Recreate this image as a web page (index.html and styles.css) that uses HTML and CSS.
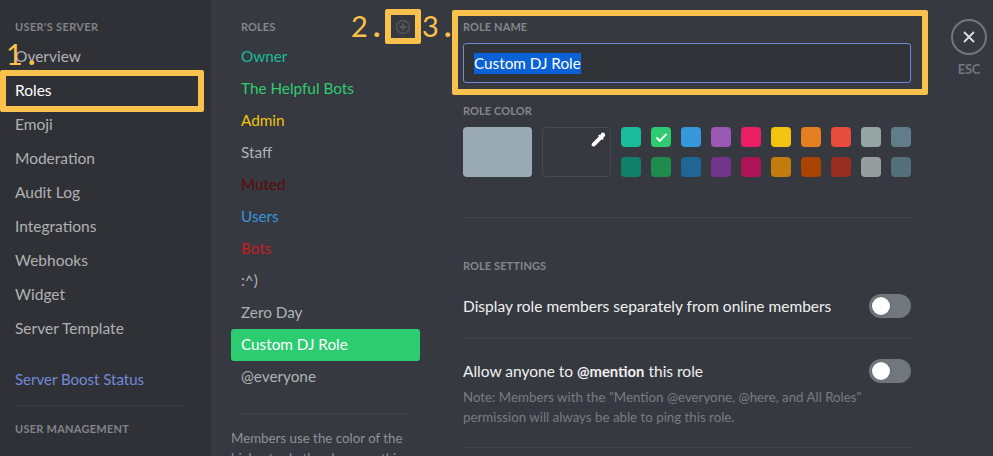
FILE: index.html
```html
<!DOCTYPE html>
<html lang="en">
<head>
<meta charset="utf-8">
<title>Server Settings - Roles</title>
<link rel="stylesheet" href="styles.css">
</head>
<body>
<div class="app">
  <nav class="sidebar">
    <h2 class="cap side-head">USER'S SERVER</h2>
    <a class="side-item">Overview</a>
    <a class="side-item active">Roles</a>
    <a class="side-item">Emoji</a>
    <a class="side-item">Moderation</a>
    <a class="side-item">Audit Log</a>
    <a class="side-item">Integrations</a>
    <a class="side-item">Webhooks</a>
    <a class="side-item">Widget</a>
    <a class="side-item">Server Template</a>
    <div class="side-sep-top"></div>
    <a class="side-item boost">Server Boost Status</a>
    <div class="side-sep"></div>
    <h2 class="cap side-head2">USER MANAGEMENT</h2>
    <a class="side-item">Members</a>
  </nav>
  <section class="roles">
    <h2 class="cap roles-head">ROLES</h2>
    <ul class="role-list">
      <li class="role teal">Owner</li>
      <li class="role green">The Helpful Bots</li>
      <li class="role yellow">Admin</li>
      <li class="role plain">Staff</li>
      <li class="role maroon">Muted</li>
      <li class="role blue">Users</li>
      <li class="role red">Bots</li>
      <li class="role plain">:^)</li>
      <li class="role plain">Zero Day</li>
      <li class="role selected">Custom DJ Role</li>
      <li class="role plain">@everyone</li>
    </ul>
    <div class="roles-sep"></div>
    <p class="roles-note">Members use the color of the highest role they have on this list.</p>
  </section>
  <main class="editor">
    <h2 class="cap name-label">ROLE NAME</h2>
    <div class="name-input"><span class="selection">Custom DJ Role</span></div>
    <h2 class="cap color-label">ROLE COLOR</h2>
    <div class="colors">
      <div class="color-default"></div>
      <div class="color-custom">
        <svg class="dropper" viewBox="0 0 16 16" width="16" height="16"><path fill="#fff" d="M11.2 1.2c.9-.9 2.4-.9 3.3 0s.9 2.400 0 3.300l-1.500 1.500.8.8-1.300 1.300-.8-.8-6.700 6.700c-.7.600-2.100.900-2.900.1s-.500-2.200.1-2.900l6.700-6.700-.8-.8 1.300-1.300.8.800z"/></svg>
      </div>
      <div class="swatches">
        <span class="swatch c1"></span>
        <span class="swatch c2"><svg viewBox="0 0 14 12" width="13" height="11"><path fill="none" stroke="#fff" stroke-width="2.200" d="M1.500 6l3.700 3.700L12.500 2"/></svg></span>
        <span class="swatch c3"></span>
        <span class="swatch c4"></span>
        <span class="swatch c5"></span>
        <span class="swatch c6"></span>
        <span class="swatch c7"></span>
        <span class="swatch c8"></span>
        <span class="swatch c9"></span>
        <span class="swatch c10"></span>
        <span class="swatch c11"></span>
        <span class="swatch c12"></span>
        <span class="swatch c13"></span>
        <span class="swatch c14"></span>
        <span class="swatch c15"></span>
        <span class="swatch c16"></span>
        <span class="swatch c17"></span>
        <span class="swatch c18"></span>
        <span class="swatch c19"></span>
        <span class="swatch c20"></span>
      </div>
    </div>
    <div class="sep sep-colors"></div>
    <h2 class="cap settings-label">ROLE SETTINGS</h2>
    <div class="setting first">
      <span class="setting-title">Display role members separately from online members</span>
      <span class="toggle"><span class="knob"></span></span>
    </div>
    <div class="sep sep-a"></div>
    <div class="setting second">
      <span class="setting-title">Allow anyone to <b>@mention</b> this role</span>
      <span class="toggle"><span class="knob"></span></span>
    </div>
    <p class="setting-note">Note: Members with the "Mention @everyone, @here, and All Roles" permission will always be able to ping this role.</p>
    <div class="sep sep-b"></div>
  </main>
  <aside class="esc">
    <span class="esc-circle"><svg viewBox="0 0 14 14" width="14" height="14"><path stroke="#dcddde" stroke-width="1.800" fill="none" d="M2 2l10 10M12 2L2 12"/></svg></span>
    <span class="esc-text">ESC</span>
  </aside>
</div>

<div class="mark mark-roles"></div>
<div class="mark mark-add"><svg viewBox="0 0 16 16" width="16" height="16"><circle cx="8" cy="8" r="6.500" fill="none" stroke="#54575d" stroke-width="1.400"/><path stroke="#54575d" stroke-width="1.800" d="M8 4.500v7M4.500 8h7"/></svg></div>
<div class="mark mark-name"></div>
<span class="num num1">1 <b>.</b></span>
<span class="num num2">2 <b>.</b></span>
<span class="num num3">3 <b>.</b></span>
</body>
</html>
```
FILE: styles.css
```css
* { box-sizing: border-box; }
html, body { margin: 0; height: 456px; overflow: hidden; }
body {
  position: relative;
  background: #36393f;
  font-family: "Lato", "Noto Sans", sans-serif;
  color: #dcddde;
}
h2, p, ul { margin: 0; padding: 0; }
.app { display: flex; height: 456px; overflow: hidden; }
.cap {
  font-size: 11px;
  line-height: 14px;
  font-weight: 700;
  color: #85878a;
  letter-spacing: 0.1px;
}

/* sidebar */
.sidebar {
  width: 211px;
  flex: none;
  background: #2f3136;
  padding: 20px 0 0 15px;
}
.side-head { margin-bottom: 5px; color: #82848a; letter-spacing: 0.35px; }
.side-head2 { margin-top: 16px; margin-bottom: 10px; color: #82848a; letter-spacing: 0.25px; }
.side-item {
  display: block;
  height: 34px;
  line-height: 34px;
  font-size: 15.5px;
  color: #b0b2b5;
}
.side-item.active { color: #fff; }
.side-item.boost { color: #7289da; height: 34px; font-size: 15px; }
.side-sep-top { height: 17px; }
.side-sep { height: 1px; background: #3b3d42; width: 172px; margin-top: 9px; }

/* roles column */
.roles { width: 252px; flex: none; padding: 20px 0 0 20px; }
.roles-head { margin: 0 0 7px 10px; color: #85878a; }
.role-list { list-style: none; width: 189px; }
.role {
  height: 32px;
  line-height: 30px;
  padding-left: 10px;
  font-size: 15.3px;
  border-radius: 3px;
}
.teal { color: #1abc9c; }
.green { color: #2ecc71; }
.yellow { color: #f1c40f; }
.plain { color: #b0b2b5; }
.maroon { color: #5c0a0a; }
.blue { color: #3498db; }
.red { color: #c81e1e; }
.selected { background: #2ecc71; color: #fff; }
.roles-sep { height: 1px; width: 169px; margin: 20px 0 0 10px; background: #42454b; }
.roles-note { width: 190px; margin-top: 14px; font-size: 13.3px; line-height: 20px; color: #8e9297; }

/* editor */
.editor { width: 448px; flex: none; padding-top: 20px; }
.name-label { margin-bottom: 9px; }
.name-input {
  height: 40px;
  padding: 0 10px;
  display: flex;
  align-items: center;
  background: #303338;
  border: 1px solid #7289da;
  border-radius: 3px;
  font-size: 15.3px;
}
.selection { background: #0b62d6; color: #fff; line-height: 21px; }
.color-label { margin-top: 21px; margin-bottom: 9px; }
.colors { display: flex; gap: 10px; }
.color-default { width: 69px; height: 50px; background: #99aab5; border-radius: 4px; }
.color-custom {
  width: 69px;
  height: 50px;
  position: relative;
  border: 1px solid #47494e;
  border-radius: 4px;
}
.dropper { position: absolute; top: 4px; right: 4px; }
.swatches { display: grid; grid-template-columns: repeat(10, 20px); grid-auto-rows: 20px; gap: 10px; }
.swatch { display: flex; align-items: center; justify-content: center; border-radius: 4px; }
.c1 { background: #1abc9c; } .c2 { background: #2ecc71; } .c3 { background: #3498db; }
.c4 { background: #9b59b6; } .c5 { background: #e91e63; } .c6 { background: #f1c40f; }
.c7 { background: #e67e22; } .c8 { background: #e74c3c; } .c9 { background: #95a5a6; }
.c10 { background: #607d8b; } .c11 { background: #11806a; } .c12 { background: #1f8b4c; }
.c13 { background: #206694; } .c14 { background: #71368a; } .c15 { background: #ad1457; }
.c16 { background: #c27c0e; } .c17 { background: #a84300; } .c18 { background: #992d22; }
.c19 { background: #979c9f; } .c20 { background: #546e7a; }
.sep { height: 1px; background: #42454b; }
.sep-colors { margin-top: 40px; }
.settings-label { margin-top: 41px; }
.setting { display: flex; justify-content: space-between; align-items: center; height: 24px; }
.setting.first { margin-top: 21px; }
.setting.second { margin-top: 20px; }
.sep-a { margin-top: 20px; }
.setting-title { font-size: 15.5px; color: #f0f0f1; }
.setting-title b { font-weight: 700; font-size: 14.8px; }
.toggle { width: 42px; height: 24px; border-radius: 12px; background: #72767d; padding: 3px; flex: none; }
.knob { display: block; width: 18px; height: 18px; border-radius: 50%; background: #fff; box-shadow: 0 0 2px rgba(0,0,0,.3); }
.setting-note { margin-top: 4px; font-size: 13.3px; line-height: 20px; color: #797c82; }
.sep-b { margin-top: 20px; }

/* esc */
.esc { margin-left: 40px; padding-top: 19px; width: 36px; flex: none; display: flex; flex-direction: column; align-items: center; gap: 6px; }
.esc-circle { width: 36px; height: 36px; border: 2px solid #72767d; border-radius: 50%; display: flex; align-items: center; justify-content: center; }
.esc-text { font-size: 13px; line-height: 16px; font-weight: 700; color: #72767d; letter-spacing: -0.3px; }

/* annotations over the screenshot */
.mark { position: absolute; border: 6px solid #fac14d; border-radius: 2px; }
.mark-roles { left: 0; top: 70px; width: 204px; height: 42px; }
.mark-add { left: 385px; top: 9px; width: 36px; height: 35px; display: flex; align-items: center; justify-content: center; }
.mark-name { left: 452px; top: 10px; width: 476px; height: 85px; }
.num { position: absolute; font-size: 29px; line-height: 36px; color: #fac14d; white-space: pre; word-spacing: -2px; }
.num b { font-weight: 900; }
.num1 { left: 6px; top: 36px; }
.num2 { left: 351px; top: 8px; }
.num3 { left: 422px; top: 8px; }
```
